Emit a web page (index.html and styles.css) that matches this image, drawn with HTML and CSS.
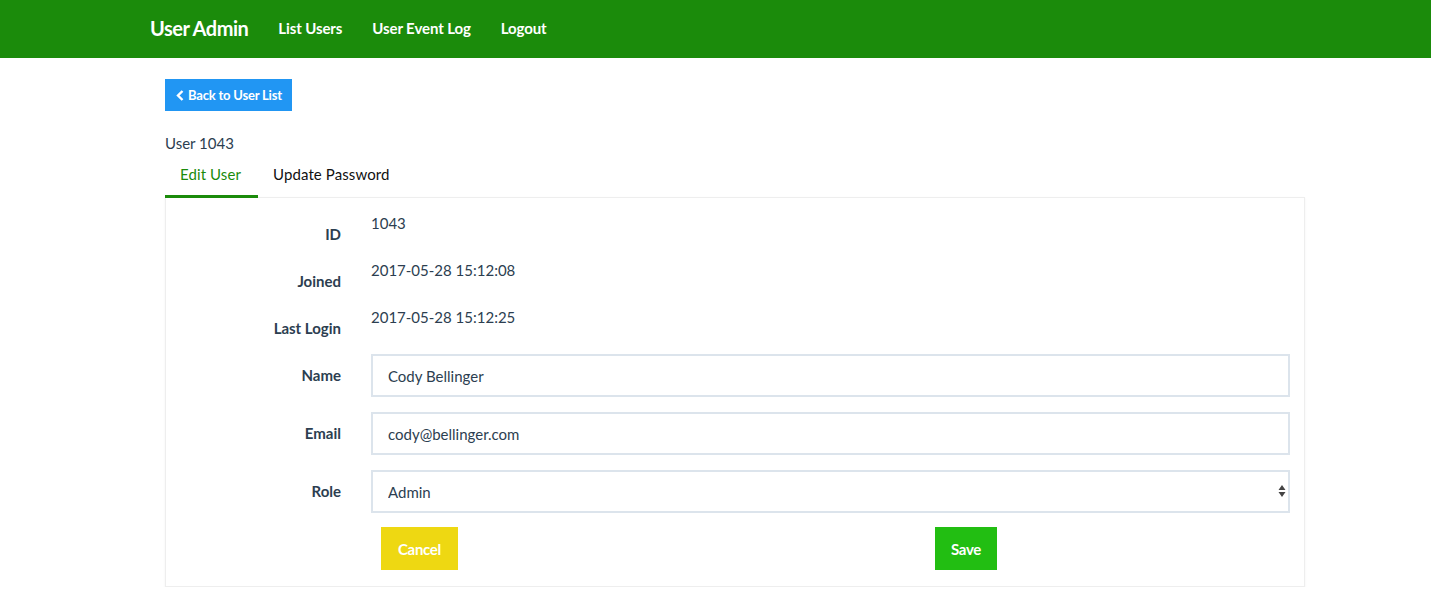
FILE: index.html
```html
<!DOCTYPE html>
<html lang="en">
<head>
<meta charset="utf-8">
<title>User Admin</title>
<link rel="stylesheet" href="styles.css">
</head>
<body>
<nav class="navbar">
  <a class="brand" href="#">User Admin</a>
  <a class="nav-link" href="#">List Users</a>
  <a class="nav-link" href="#">User Event Log</a>
  <a class="nav-link" href="#">Logout</a>
</nav>
<main class="content">
  <a class="btn-back" href="#">
    <svg class="chev" width="8" height="11" viewBox="0 0 8 11"><path d="M6.5 1 L2 5.5 L6.5 10" fill="none" stroke="#fff" stroke-width="2.4"/></svg>
    Back to User List
  </a>
  <div class="title">User 1043</div>
  <ul class="tabs">
    <li class="tab active">Edit User</li>
    <li class="tab">Update Password</li>
  </ul>
  <form class="panel">
    <div class="row static">
      <label class="lbl">ID</label>
      <div class="val">1043</div>
    </div>
    <div class="row static">
      <label class="lbl">Joined</label>
      <div class="val">2017-05-28 15:12:08</div>
    </div>
    <div class="row static">
      <label class="lbl">Last Login</label>
      <div class="val">2017-05-28 15:12:25</div>
    </div>
    <div class="row field">
      <label class="lbl">Name</label>
      <div class="ctl"><input class="input" type="text" value="Cody Bellinger"></div>
    </div>
    <div class="row field">
      <label class="lbl">Email</label>
      <div class="ctl"><input class="input" type="text" value="cody@bellinger.com"></div>
    </div>
    <div class="row field">
      <label class="lbl">Role</label>
      <div class="ctl select-wrap">
        <select class="input select"><option>Admin</option><option>User</option></select>
        <svg class="arrows" width="8" height="14" viewBox="0 0 8 14"><path d="M4 1 L7.5 6 L0.5 6 Z M4 13 L7.5 8 L0.5 8 Z" fill="#444"/></svg>
      </div>
    </div>
    <div class="row buttons">
      <div class="lbl"></div>
      <div class="btns">
        <button type="button" class="btn btn-cancel">Cancel</button>
        <button type="button" class="btn btn-save">Save</button>
      </div>
    </div>
  </form>
</main>
</body>
</html>
```
FILE: styles.css
```css
* { box-sizing: border-box; }
html, body { margin: 0; padding: 0; }
body {
  font-family: Lato, "Open Sans", sans-serif;
  font-size: 15px;
  line-height: 21px;
  color: #2c3e50;
  background: #fff;
}
a { text-decoration: none; }

.navbar {
  height: 58px;
  background: #1b8b0b;
  display: flex;
  align-items: center;
  padding-left: 150px;
  padding-bottom: 2px;
}
.brand {
  color: #fff;
  font-size: 20px;
  font-weight: 700;
  letter-spacing: -0.5px;
  margin-right: 15px;
}
.nav-link {
  color: #fff;
  font-weight: 700;
  font-size: 15px;
  padding: 0 15px;
  letter-spacing: -0.1px;
}

.content {
  margin-left: 165px;
  width: 1140px;
  padding-top: 21px;
}
.btn-back {
  display: inline-flex;
  align-items: center;
  gap: 4px;
  height: 32px;
  padding: 0 10px 0 11px;
  background: #2196f3;
  color: #fff;
  font-size: 13px;
  font-weight: 700;
  letter-spacing: -0.2px;
}
.chev { display: block; }
.title {
  margin-top: 22px;
  line-height: 21px;
}
.tabs {
  list-style: none;
  margin: 0;
  padding: 0;
  display: flex;
  height: 34px;
  margin-top: 10px;
  position: relative;
  z-index: 1;
}
.tab {
  padding: 0 16px 0 15px;
  height: 34px;
  line-height: 20px;
  color: #111;
  border-bottom: 3px solid transparent;
  letter-spacing: 0.1px;
}
.tab.active {
  color: #1b8b0b;
  border-bottom-color: #1b8b0b;
  padding-right: 17px;
}

.panel {
  margin-top: -1px;
  border: 1px solid #eeeeee;
  box-shadow: 0 1px 2px rgba(0,0,0,0.06);
  padding: 15px 0 14px 0;
  height: 390px;
}
.row {
  display: flex;
}
.lbl {
  width: 190px;
  padding: 0 15px;
  text-align: right;
  font-weight: 700;
  flex: none;
}
.static { margin-bottom: 15px; }
.static .lbl { padding-top: 11px; }
.static .val { padding-left: 15px; }
.field {
  align-items: center;
  margin-bottom: 15px;
}
.ctl {
  flex: 1;
  padding: 0 14px 0 15px;
}
.input {
  display: block;
  width: 100%;
  height: 43px;
  border: 2px solid #dce4ec;
  border-radius: 0;
  padding: 0 15px;
  font-family: Lato, "Open Sans", sans-serif;
  font-size: 15px;
  color: #2c3e50;
  background: #fff;
  outline: none;
}
.select-wrap { position: relative; }
.select {
  -webkit-appearance: none;
  appearance: none;
}
.arrows {
  position: absolute;
  right: 18px;
  top: 14px;
}
.buttons { margin-top: -1px; }
.btns {
  flex: 1;
  display: flex;
  padding-left: 25px;
  gap: 477px;
}
.btn {
  height: 43px;
  border: 0;
  border-radius: 0;
  padding: 0 15px;
  font-family: Lato, "Open Sans", sans-serif;
  font-size: 15px;
  font-weight: 700;
  color: #fff;
  letter-spacing: -0.3px;
}
.btn-cancel { background: #eed812; width: 77px; }
.btn-save { background: #22be12; width: 62px; }
```
